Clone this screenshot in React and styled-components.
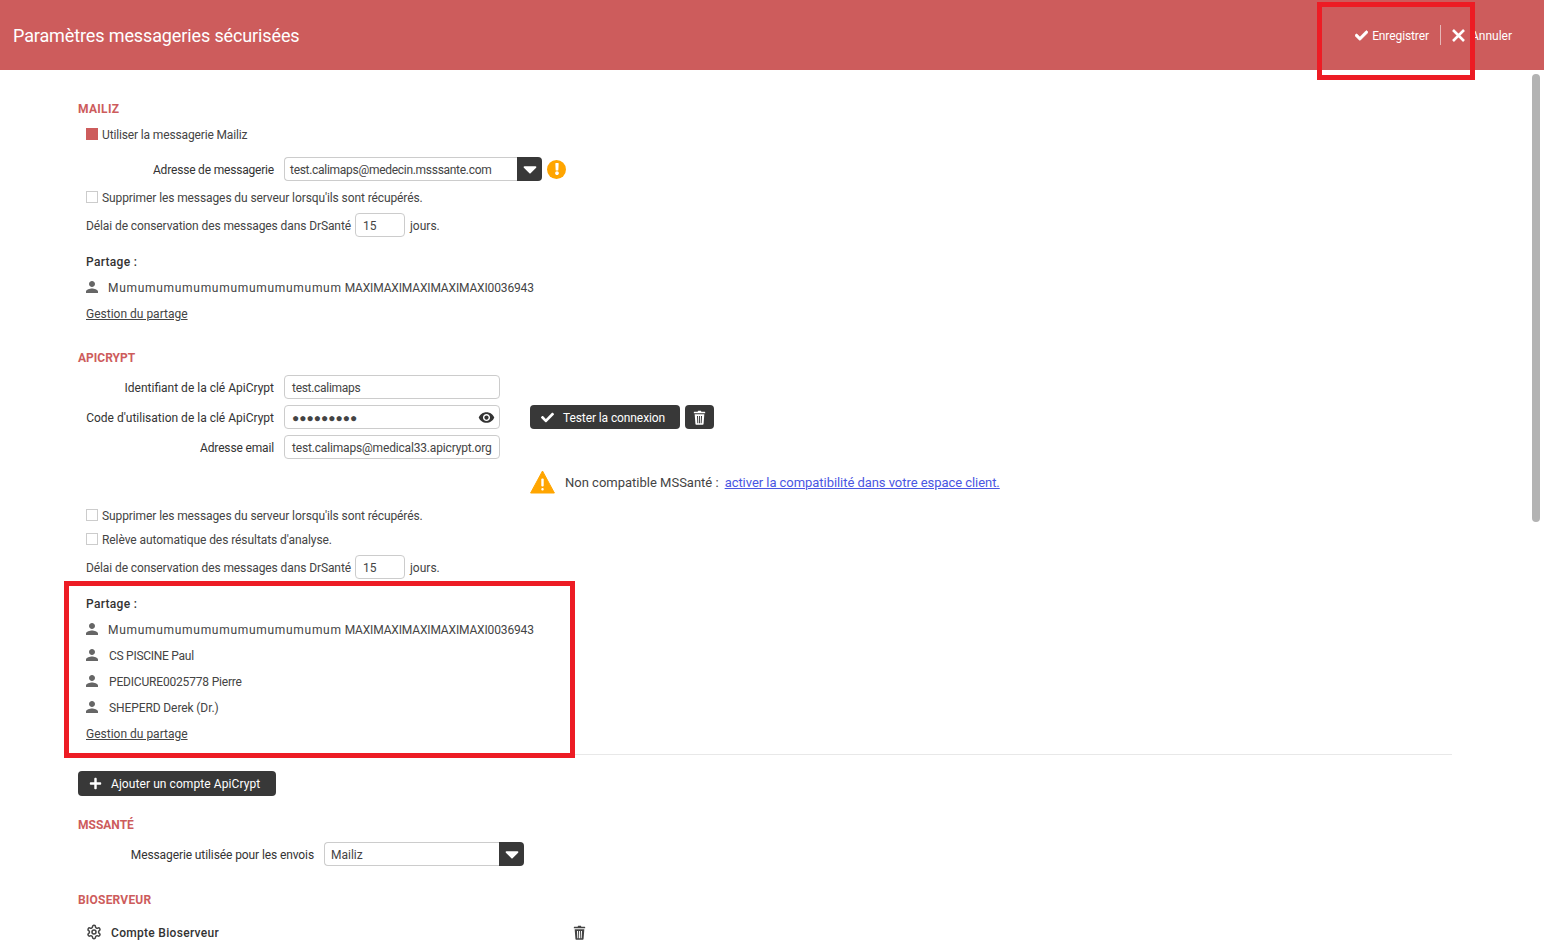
import React from 'react'
import styled, { createGlobalStyle } from 'styled-components'
import { FaCheck, FaPlus, FaExclamation, FaCaretDown } from 'react-icons/fa'
import { MdPerson, MdRemoveRedEye } from 'react-icons/md'
import { LuSettings } from 'react-icons/lu'

const RED = '#cd5c5c'
const DARK = '#383838'
const TEXT = '#444'

const GlobalStyle = createGlobalStyle`
  html, body {
    margin: 0;
    height: 100%;
    overflow: hidden;
    background: #fff;
  }
  body {
    font-family: Roboto, "Noto Sans", sans-serif;
    font-size: 12px;
    color: ${TEXT};
  }
`

const Page = styled.div`
  position: relative;
  height: 946px;
  overflow: hidden;
`

const Header = styled.header`
  height: 70px;
  background: ${RED};
  color: #fff;
  display: flex;
  align-items: center;
  justify-content: space-between;
  padding: 0 32px 0 13px;
`

const Title = styled.h1`
  margin: 0;
  font-size: 18px;
  font-weight: 400;
  letter-spacing: -0.12px;
`

const HeaderActions = styled.div`
  display: flex;
  align-items: center;
`

const HeaderAction = styled.span`
  display: flex;
  align-items: center;
  gap: ${({ $gap }) => $gap}px;
  font-size: 12px;
  svg { flex: none; }
`

const HeaderDivider = styled.span`
  width: 1px;
  height: 20px;
  background: #e6b8b8;
  margin: 0 11px;
`

const Content = styled.main`
  padding: 0 92px 0 78px;
`

const SectionTitle = styled.h2`
  margin: 0;
  height: ${({ $h }) => $h}px;
  padding-top: ${({ $top }) => $top}px;
  display: flex;
  align-items: center;
  font-size: 12px;
  font-weight: 700;
  letter-spacing: ${({ $ls }) => $ls || 0}px;
  color: ${RED};
`

const Row = styled.div`
  display: flex;
  align-items: center;
  height: ${({ $h }) => $h}px;
  padding-top: ${({ $top }) => $top || 0}px;
  padding-left: ${({ $indent }) => ($indent === undefined ? 8 : $indent)}px;
`

// text sits a pixel lower than the centred boxes around it
const Txt = styled.span`
  padding-top: ${({ $pt }) => ($pt === undefined ? 2 : $pt)}px;
  letter-spacing: ${({ $ls }) => $ls || 0}px;
  white-space: nowrap;
`

const Box = styled.span`
  width: 12px;
  height: 12px;
  flex: none;
  margin-right: 4px;
  box-sizing: border-box;
  border: 1px solid ${({ $checked }) => ($checked ? RED : '#ccc')};
  background: ${({ $checked }) => ($checked ? RED : '#fff')};
`

const FieldLabel = styled.label`
  width: ${({ $w }) => $w}px;
  flex: none;
  text-align: right;
  margin-right: 10px;
  padding-top: 2px;
  letter-spacing: ${({ $ls }) => $ls || 0}px;
  color: #333;
  white-space: nowrap;
`

const Input = styled.div`
  display: flex;
  align-items: center;
  justify-content: space-between;
  box-sizing: border-box;
  width: ${({ $w }) => $w}px;
  height: 24px;
  padding: 2px ${({ $pr }) => ($pr === undefined ? 6 : $pr)}px 0 7px;
  border: 1px solid #ccc;
  border-radius: 4px;
  background: #fff;
  color: #444;
  letter-spacing: ${({ $ls }) => $ls || 0}px;
  white-space: nowrap;
  flex: none;
  svg { margin-top: -2px; }
`

const Select = styled.div`
  display: flex;
  width: ${({ $w }) => $w}px;
  height: 24px;
  flex: none;
`

const SelectValue = styled.div`
  flex: 1;
  display: flex;
  align-items: center;
  padding: 2px 0 0 ${({ $pl }) => $pl}px;
  border: 1px solid #ccc;
  border-right: 0;
  border-radius: 4px 0 0 4px;
  letter-spacing: ${({ $ls }) => $ls || 0}px;
  color: #444;
`

const SelectArrow = styled.div`
  width: 25px;
  display: flex;
  align-items: center;
  justify-content: center;
  background: ${DARK};
  border-radius: 0 4px 4px 0;
  color: #fff;
`

const AlertBadge = styled.span`
  width: 19px;
  height: 19px;
  margin-left: 5px;
  border-radius: 50%;
  background: #ffa500;
  color: #fff;
  display: flex;
  align-items: center;
  justify-content: center;
`

const SmallInput = styled(Input)`
  width: 50px;
  margin: 0 5px 0 4px;
`

const Strong = styled.strong`
  font-weight: 500;
  padding-top: 2px;
  letter-spacing: ${({ $ls }) => $ls || 0}px;
  color: #333;
`

const Person = styled.span`
  display: flex;
  align-items: center;
  svg {
    flex: none;
    color: #666;
    margin: 0 ${({ $gap }) => $gap}px 0 -3px;
  }
`

const ManageLink = styled.a`
  padding-top: 2px;
  color: #444;
  text-decoration: underline;
`

const ApiBlock = styled.div`
  display: flex;
  align-items: flex-start;
  margin-top: 2px;
`

const ApiFields = styled.div`
  width: 422px;
  flex: none;
`

const ApiActions = styled.div`
  padding: 33px 0 0 30px;
  display: flex;
  gap: 5px;
`

const DarkButton = styled.button`
  display: flex;
  align-items: center;
  justify-content: ${({ $square }) => ($square ? 'center' : 'flex-start')};
  gap: ${({ $gap }) => $gap}px;
  height: ${({ $h }) => $h}px;
  width: ${({ $w }) => $w}px;
  padding: 0 0 0 ${({ $pl }) => $pl}px;
  border: 0;
  border-radius: 4px;
  background: ${DARK};
  color: #fff;
  font: inherit;
  svg { flex: none; }
`

const Notice = styled(Row)`
  padding-left: 452px;
  font-size: 13px;
  svg {
    flex: none;
    margin-right: 10px;
  }
`

const NoticeLink = styled.a`
  margin-left: 6px;
  color: #4a56e2;
  letter-spacing: -0.05px;
  text-decoration: underline;
`

const Divider = styled.hr`
  margin: 8px 0 0;
  border: 0;
  border-top: 1px solid #e8e8e8;
`

const ServerRow = styled(Row)`
  justify-content: space-between;
  width: 500px;
  svg { flex: none; color: #444; }
`

const ServerName = styled.span`
  display: flex;
  align-items: center;
  gap: 9px;
`

// annotation frames drawn over the capture
const Frame = styled.div`
  position: absolute;
  left: ${({ $x }) => $x}px;
  top: ${({ $y }) => $y}px;
  width: ${({ $w }) => $w}px;
  height: ${({ $h }) => $h}px;
  box-sizing: border-box;
  border: 5px solid #ed1c24;
  pointer-events: none;
`

const Scrollbar = styled.div`
  position: absolute;
  left: 1532px;
  top: 74px;
  width: 8px;
  height: 448px;
  border-radius: 4px;
  background: #b3b3b3;
`

const Caret = () => <FaCaretDown size={22} />

const CloseIcon = () => (
  <svg width="13" height="13" viewBox="0 0 13 13" aria-hidden="true">
    <path d="M1 1 12 12M12 1 1 12" stroke="currentColor" strokeWidth="2.6" fill="none" />
  </svg>
)

const TrashIcon = () => (
  <svg width="13" height="15" viewBox="0 0 14 16" fill="currentColor" aria-hidden="true">
    <path d="M5 1.8 5.5.6h3L9 1.8h3.6c.3 0 .5.2.5.5v1.2H.9V2.300c0-.3.2-.5.5-.5z" />
    <path
      fillRule="evenodd"
      d="M1.800 4.500h10.400l-.8 10.300c0 .6-.5 1.100-1.100 1.100H3.700c-.6 0-1.100-.5-1.100-1.100zM4.300 6.300l.4 7.900h1l-.3-7.900zM6.500 6.300v7.900h1V6.300zM8.600 6.300l-.3 7.900h1l.4-7.900z"
    />
  </svg>
)

const WarningIcon = () => (
  <svg width="25" height="24" viewBox="0 0 25 24" aria-hidden="true">
    <path d="M12.500 1 24.400 23H.6z" fill="#ffa500" stroke="#ffa500" strokeWidth="1" strokeLinejoin="round" />
    <rect x="11.300" y="8.500" width="2.400" height="8" rx="1" fill="#fff" />
    <rect x="11.300" y="18" width="2.400" height="2.400" rx="1" fill="#fff" />
  </svg>
)

const PersonRow = ({ children, gap = 8 }) => (
  <Row $h={26}>
    <Person $gap={gap}>
      <MdPerson size={18} />
      {children}
    </Person>
  </Row>
)

const LongName = () => (
  <PersonRow gap={7}>
    <Txt $ls={0.7}>Mumumumumumumumumumumumum</Txt>
    &nbsp;
    <Txt $ls={-0.15}>MAXIMAXIMAXIMAXIMAXI0036943</Txt>
  </PersonRow>
)

const Retention = ({ h }) => (
  <Row $h={h}>
    <Txt $ls={-0.1}>Délai de conservation des messages dans DrSanté</Txt>
    <SmallInput $w={50}>15</SmallInput>
    <Txt>jours.</Txt>
  </Row>
)

const App = () => (
  <>
    <GlobalStyle />
    <Page>
      <Header>
        <Title>Paramètres messageries sécurisées</Title>
        <HeaderActions>
          <HeaderAction $gap={4}>
            <FaCheck size={13} stroke="currentColor" strokeWidth={24} />
            <Txt $ls={-0.1}>Enregistrer</Txt>
          </HeaderAction>
          <HeaderDivider />
          <HeaderAction $gap={6}>
            <CloseIcon />
            <Txt>Annuler</Txt>
          </HeaderAction>
        </HeaderActions>
      </Header>

      <Content>
        <SectionTitle $h={24} $top={27} $ls={0.3}>MAILIZ</SectionTitle>
        <Row $h={26}><Box $checked /><Txt $ls={-0.14}>Utiliser la messagerie Mailiz</Txt></Row>
        <Row $h={44}>
          <FieldLabel $w={188} $ls={-0.19}>Adresse de messagerie</FieldLabel>
          <Select $w={258}>
            <SelectValue $pl={5} $ls={-0.29}>test.calimaps@medecin.msssante.com</SelectValue>
            <SelectArrow><Caret /></SelectArrow>
          </Select>
          <AlertBadge><FaExclamation size={12} /></AlertBadge>
        </Row>
        <Row $h={12}><Box /><Txt $ls={-0.1}>Supprimer les messages du serveur lorsqu'ils sont récupérés.</Txt></Row>
        <Retention h={44} />
        <Row $h={26} $top={1}><Strong $ls={0.3}>Partage :</Strong></Row>
        <LongName />
        <Row $h={26}><ManageLink>Gestion du partage</ManageLink></Row>

        <SectionTitle $h={24} $top={20}>APICRYPT</SectionTitle>
        <ApiBlock>
          <ApiFields>
            <Row $h={30} $indent={0}>
              <FieldLabel $w={196}>Identifiant de la clé ApiCrypt</FieldLabel>
              <Input $w={216} $ls={-0.3}>test.calimaps</Input>
            </Row>
            <Row $h={30} $indent={0}>
              <FieldLabel $w={196}>Code d'utilisation de la clé ApiCrypt</FieldLabel>
              <Input $w={216} $pr={4}>
                ●●●●●●●●●
                <MdRemoveRedEye size={17} color="#333" />
              </Input>
            </Row>
            <Row $h={30} $indent={0}>
              <FieldLabel $w={196} $ls={-0.15}>Adresse email</FieldLabel>
              <Input $w={216} $ls={-0.17}>test.calimaps@medical33.apicrypt.org</Input>
            </Row>
          </ApiFields>
          <ApiActions>
            <DarkButton $w={150} $h={24} $pl={11} $gap={9}><FaCheck size={13} /><Txt $ls={-0.1}>Tester la connexion</Txt></DarkButton>
            <DarkButton $square $w={29} $h={24} $pl={0}><TrashIcon /></DarkButton>
          </ApiActions>
        </ApiBlock>
        <Notice $h={40}>
          <WarningIcon />
          Non compatible MSSanté :
          <NoticeLink>activer la compatibilité dans votre espace client.</NoticeLink>
        </Notice>
        <Row $h={26}><Box /><Txt $ls={-0.1}>Supprimer les messages du serveur lorsqu'ils sont récupérés.</Txt></Row>
        <Row $h={22}><Box /><Txt $ls={-0.07}>Relève automatique des résultats d'analyse.</Txt></Row>
        <Retention h={34} />
        <Row $h={26} $top={6}><Strong $ls={0.3}>Partage :</Strong></Row>
        <LongName />
        <PersonRow><Txt $ls={-0.27}>CS PISCINE Paul</Txt></PersonRow>
        <PersonRow><Txt $ls={-0.18}>PEDICURE0025778 Pierre</Txt></PersonRow>
        <PersonRow><Txt $ls={-0.1}>SHEPERD Derek (Dr.)</Txt></PersonRow>
        <Row $h={26}><ManageLink>Gestion du partage</ManageLink></Row>
        <Divider />
        <Row $h={57} $indent={0}>
          <DarkButton $w={198} $h={25} $pl={11} $gap={9}><FaPlus size={13} /><Txt $pt={0} $ls={0.08}>Ajouter un compte ApiCrypt</Txt></DarkButton>
        </Row>
        <SectionTitle $h={18} $top={4}>MSSANTÉ</SectionTitle>
        <Row $h={40} $indent={0}>
          <FieldLabel $w={236} $ls={-0.1}>Messagerie utilisée pour les envois</FieldLabel>
          <Select $w={200}>
            <SelectValue $pl={6}>Mailiz</SelectValue>
            <SelectArrow><Caret /></SelectArrow>
          </Select>
        </Row>
        <SectionTitle $h={18} $top={17} $ls={0.2}>BIOSERVEUR</SectionTitle>
        <ServerRow $h={46}>
          <ServerName><LuSettings size={16} strokeWidth={2.3} /><Strong $ls={0.3}>Compte Bioserveur</Strong></ServerName>
          <TrashIcon />
        </ServerRow>
      </Content>

      <Scrollbar />
      <Frame $x={1317} $y={2} $w={158} $h={78} />
      <Frame $x={64} $y={581} $w={511} $h={177} />
    </Page>
  </>
)

export default App
